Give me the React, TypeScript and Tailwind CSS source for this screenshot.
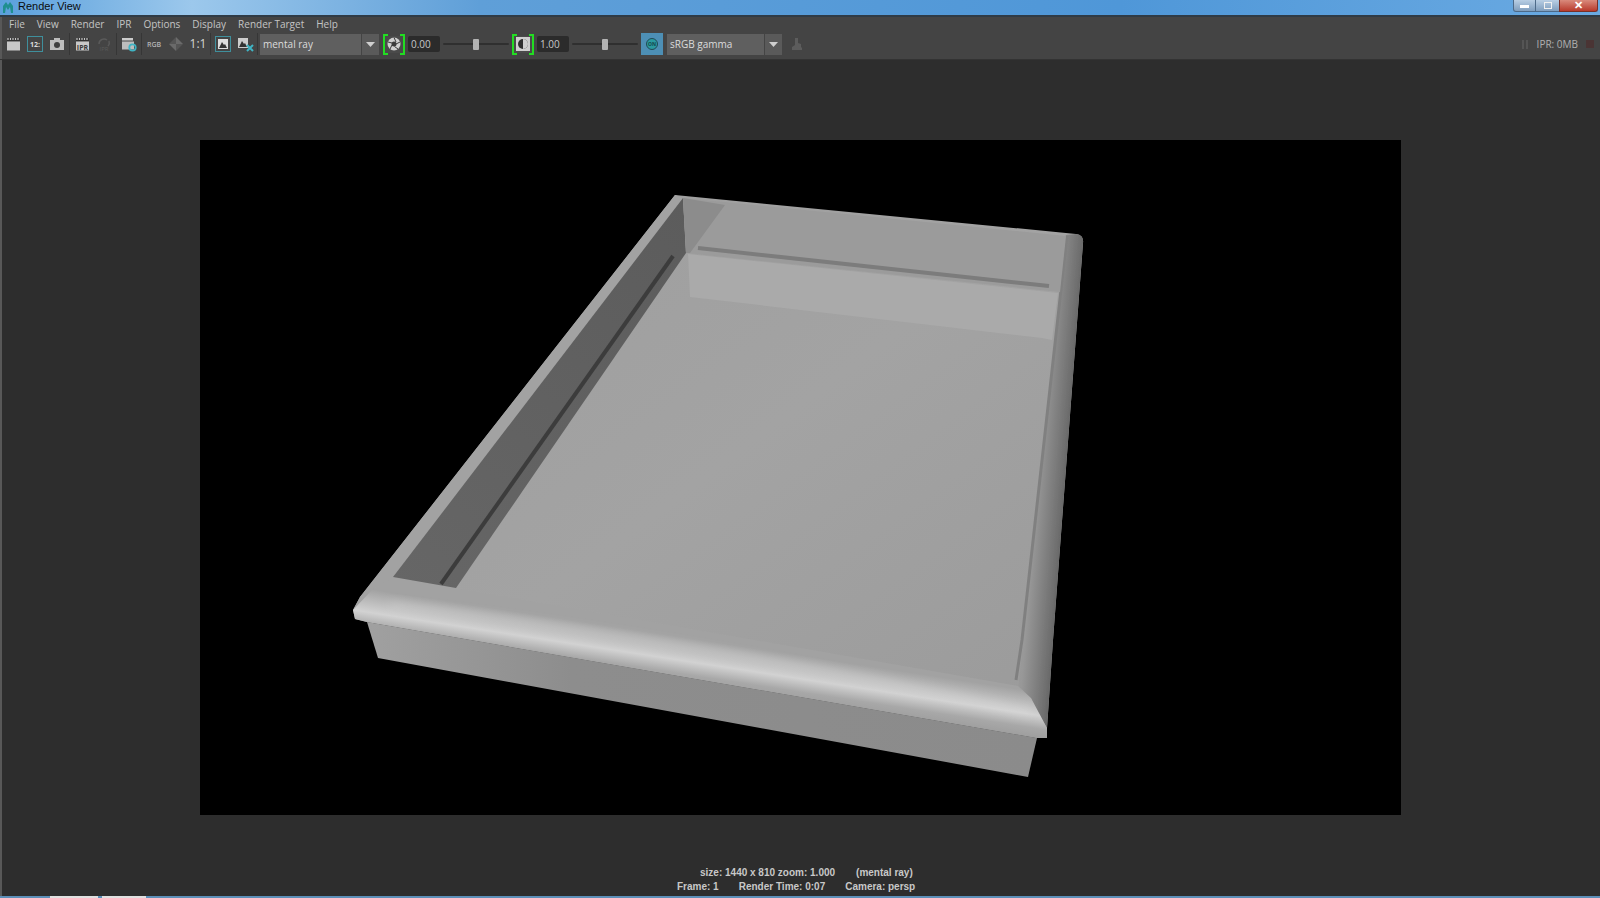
import React from "react";

const Sep = () => <div className="w-[1px] h-[22px] bg-[#363636] mx-[1px] shrink-0" />;

const Box = ({ children, active }: { children: React.ReactNode; active?: boolean }) => (
  <div className="w-[22px] h-[22px] flex items-center justify-center shrink-0">
    <div className={active ? "w-[16px] h-[16px] border border-[#3f8f9c] flex items-center justify-center" : "flex items-center justify-center"}>{children}</div>
  </div>
);

const Clapper = ({ tone = "#c8c8c8", children }: { tone?: string; children?: React.ReactNode }) => (
  <svg width="15" height="14" viewBox="0 0 15 14">
    <rect x="1" y="1" width="13" height="3" fill="#303030" />
    <path d="M2 1v2M4.5 1v2M7 1v2M9.5 1v2M12 1v2" stroke={tone} strokeWidth="1.2" />
    <rect x="1" y="4.5" width="13" height="9" fill={tone} />
    {children}
  </svg>
);

const Dropdown = ({ label, w }: { label: string; w: string }) => (
  <div className={`flex h-[21px] shrink-0 ${w}`}>
    <div className="flex-1 bg-[#5f5f5f] flex items-center pl-[3px] text-[10px] text-[#dcdcdc]">{label}</div>
    <div className="w-[17px] ml-[1px] bg-[#5a5a5a] flex items-center justify-center">
      <svg width="9" height="5" viewBox="0 0 9 5"><path d="M0 0h9L4.5 5z" fill="#cfcfcf" /></svg>
    </div>
  </div>
);

const Slider = () => (
  <div className="relative w-[66px] h-[21px] flex items-center shrink-0">
    <div className="w-full h-[2px] bg-[#2f2f2f] rounded" />
    <div className="absolute left-[30px] top-[5px] w-[6px] h-[11px] rounded-[1px] bg-[#b4b4b4]" />
  </div>
);

const Bracket = ({ children }: { children: React.ReactNode }) => (
  <div className="w-[22px] h-[21px] border-2 border-[#22dd22] bg-[#4a4a4a] relative flex items-center justify-center shrink-0">
    <div className="absolute left-[3px] right-[3px] top-[-2px] h-[2px] bg-[#444444]" />
    <div className="absolute left-[3px] right-[3px] bottom-[-2px] h-[2px] bg-[#444444]" />
    {children}
  </div>
);

const Field = ({ v }: { v: string }) => (
  <div className="w-[32px] h-[16px] ml-[3px] bg-[#2b2b2b] rounded-[2px] flex items-center pl-[3px] text-[10px] text-[#c8c8c8] shrink-0">{v}</div>
);

export default function App() {
  return (
    <div className="w-[1600px] h-[898px] overflow-hidden flex flex-col bg-[#2d2d2d] font-['Open_Sans',sans-serif]">
      {/* title bar */}
      <div className="h-[15px] shrink-0 flex bg-[linear-gradient(90deg,#5aa0dc,#9cc8ec_12%,#5f9fd8_30%,#4f97d8_70%,#6aaae2)]">
        <svg width="18" height="15" viewBox="0 0 18 15" className="shrink-0">
          <path d="M3 13V6l3-4 2 3 2-3 3 4v7h-2l-1-6-2 3-2-3-1 6z" fill="#1f8f8f" />
        </svg>
        <div className="text-[11px] leading-[13px] text-[#0c0c0c] font-['Liberation_Sans',sans-serif]">Render View</div>
        <div className="ml-auto mr-[2px] h-[12px] flex shrink-0">
          <div className="w-[23px] rounded-bl-[3px] border border-t-0 border-[#4d6a88] bg-[linear-gradient(#b9cfe4,#7f9dbd)] flex items-center justify-center">
            <div className="w-[9px] h-[3px] bg-white mt-[2px]" />
          </div>
          <div className="w-[23px] border-b border-[#4d6a88] bg-[linear-gradient(#b9cfe4,#7f9dbd)] flex items-center justify-center">
            <div className="w-[8px] h-[7px] border border-[#f0f0f0]" />
          </div>
          <div className="w-[39px] rounded-br-[3px] border border-t-0 border-[#7a3028] bg-[linear-gradient(#d98a7c,#b83a2c)] flex items-center justify-center text-white text-[11px] leading-none font-bold font-['Liberation_Sans',sans-serif]">✕</div>
        </div>
      </div>
      <div className="h-[2px] shrink-0 bg-[#2f3b46]" />
      {/* menu + toolbar */}
      <div className="h-[42px] shrink-0 bg-[#444444] border-l-2 border-[#585858] flex flex-col">
        <div className="h-[15px] flex items-center gap-[12px] pl-[7px] text-[10px] text-[#c4c4c4] shrink-0">
          {["File", "View", "Render", "IPR", "Options", "Display", "Render Target", "Help"].map((m) => (
            <span key={m}>{m}</span>
          ))}
        </div>
        <div className="flex items-center h-[24px]">
          <Box><Clapper /></Box>
          <Box active><span className="text-[7px] leading-none text-[#ddd] font-bold">12:</span></Box>
          <Box>
            <svg width="14" height="12" viewBox="0 0 14 12"><rect y="2" width="14" height="10" fill="#bcbcbc" /><rect x="4" y="0" width="6" height="3" fill="#bcbcbc" /><circle cx="7" cy="7" r="3" fill="#3e3e3e" /></svg>
          </Box>
          <Sep />
          <Box><Clapper><text x="7.5" y="12.5" fontSize="7" fontWeight="700" textAnchor="middle" fill="#3a3a3a">IPR</text></Clapper></Box>
          <Box>
            <svg width="16" height="16" viewBox="0 0 16 16" fill="none" stroke="#5a5a5a" strokeWidth="1.5"><path d="M3 8a5 5 0 0 1 8-4M13 5a5 5 0 0 1-1 5" /><text x="8" y="15" fontSize="6" fill="#5a5a5a" stroke="none" textAnchor="middle">IPR</text></svg>
          </Box>
          <Sep />
          <Box>
            <svg width="16" height="15" viewBox="0 0 16 15"><rect x="1" y="1" width="11" height="2.5" fill="#ccc" /><rect x="1" y="4.5" width="12" height="8" fill="#bdbdbd" /><circle cx="11.5" cy="10.5" r="3.2" fill="none" stroke="#3fb4c4" strokeWidth="1.8" /></svg>
          </Box>
          <Sep />
          <Box><span className="text-[7px] leading-none text-[#b4b4b4] font-semibold">RGB</span></Box>
          <Box>
            <svg width="14" height="14" viewBox="0 0 14 14"><path d="M7 0l7 7H7z" fill="#6a6a6a" /><path d="M0 7h7v7z" fill="#6a6a6a" /><path d="M7 0v7H0z" fill="#555" /><path d="M14 7H7v7z" fill="#555" /></svg>
          </Box>
          <Box><span className="text-[12px] leading-none text-[#d4d4d4]">1:1</span></Box>
          <Sep />
          <Box active>
            <svg width="10" height="10" viewBox="0 0 10 10"><rect width="10" height="10" fill="#ddd" /><path d="M1 9l3-6 2 3 1-1 2 4z" fill="#333" /></svg>
          </Box>
          <Box>
            <svg width="17" height="15" viewBox="0 0 17 15"><rect x="1" y="1" width="10" height="10" fill="#ccc" /><path d="M2 10l3-6 2 3 1-1 2 4z" fill="#333" /><path d="M10 8l6 6M16 8l-6 6" stroke="#3fb4c4" strokeWidth="2" /></svg>
          </Box>
          <Sep />
          <div className="w-[1px]" />
          <Dropdown label="mental ray" w="w-[119px]" />
          <div className="w-[4px]" />
          <Bracket>
            <svg width="14" height="14" viewBox="0 0 14 14"><circle cx="7" cy="7" r="6.5" fill="#cfcfcf" /><circle cx="7" cy="7" r="2.5" fill="#3a3a3a" /><path d="M7 .5L9 5M13 5L9 7M11 12L7.5 9.5M3 12l2-4M1 5l4 1" stroke="#3a3a3a" strokeWidth="1" /></svg>
          </Bracket>
          <Field v="0.00" />
          <div className="w-[3px]" />
          <Slider />
          <div className="w-[3px]" />
          <Bracket>
            <svg width="14" height="14" viewBox="0 0 14 14"><rect width="14" height="14" fill="#cfcfcf" /><circle cx="7" cy="7" r="5" fill="#2f2f2f" /><path d="M7 2a5 5 0 0 1 0 10z" fill="#cfcfcf" /></svg>
          </Bracket>
          <Field v="1.00" />
          <div className="w-[3px]" />
          <Slider />
          <div className="w-[3px]" />
          <div className="w-[22px] h-[22px] bg-[#4d8fb5] flex items-center justify-center shrink-0">
            <div className="w-[12px] h-[12px] rounded-full bg-[#2a9a9f] border border-[#214a55] text-[5px] leading-[10px] text-center text-[#15464c] font-bold">ON</div>
          </div>
          <div className="w-[4px]" />
          <Dropdown label="sRGB gamma" w="w-[115px]" />
          <div className="w-[4px]" />
          <Box>
            <svg width="14" height="14" viewBox="0 0 14 14"><path d="M5 1h3v5l3 1v3l1 1v2H2v-3l3-2z" fill="#5c5c5c" /></svg>
          </Box>
          <div className="ml-auto flex items-center shrink-0">
            <div className="w-[2px] h-[9px] bg-[#555]" />
            <div className="w-[2px] h-[9px] bg-[#555] ml-[2px]" />
            <span className="ml-[9px] text-[10px] text-[#b0b0b0]">IPR: 0MB</span>
            <div className="ml-[8px] mr-[6px] w-[8px] h-[8px] bg-[#4a3434]" />
          </div>
        </div>
      </div>
      <div className="h-[1px] shrink-0 bg-[#333333]" />
      {/* canvas */}
      <div className="flex-1 min-h-0 flex flex-col border-l-2 border-[#585858]">
        <div className="pl-[198px] pt-[80px] shrink-0">
          <svg width="1201" height="675" viewBox="200 140 1201 675" className="block bg-black">
            <defs>
              <linearGradient id="floor" x1="0" y1="0" x2="1" y2="1">
                <stop offset="0" stopColor="#9d9d9d" />
                <stop offset="0.5" stopColor="#a3a3a3" />
                <stop offset="1" stopColor="#9a9a9a" />
              </linearGradient>
              <linearGradient id="rimR" x1="1010" y1="450" x2="1075" y2="455" gradientUnits="userSpaceOnUse">
                <stop offset="0" stopColor="#a0a0a0" />
                <stop offset="0.45" stopColor="#989898" />
                <stop offset="1" stopColor="#5c5c5c" />
              </linearGradient>
              <linearGradient id="rimF" x1="700" y1="640" x2="690" y2="705" gradientUnits="userSpaceOnUse">
                <stop offset="0" stopColor="#a2a2a2" />
                <stop offset="0.35" stopColor="#d2d2d2" />
                <stop offset="0.55" stopColor="#a8a8a8" />
                <stop offset="1" stopColor="#8a8a8a" />
              </linearGradient>
              <linearGradient id="side" x1="700" y1="680" x2="695" y2="730" gradientUnits="userSpaceOnUse">
                <stop offset="0" stopColor="#8a8a8a" />
                <stop offset="1" stopColor="#7f7f7f" />
              </linearGradient>
              <linearGradient id="sideX" x1="370" y1="0" x2="1040" y2="0" gradientUnits="userSpaceOnUse">
                <stop offset="0" stopColor="#a0a0a0" />
                <stop offset="0.3" stopColor="#8d8d8d" />
                <stop offset="1" stopColor="#8b8b8b" />
              </linearGradient>
              <linearGradient id="wall" x1="680" y1="200" x2="400" y2="590" gradientUnits="userSpaceOnUse">
                <stop offset="0" stopColor="#5c5c5c" />
                <stop offset="1" stopColor="#666666" />
              </linearGradient>
              <filter id="b1"><feGaussianBlur stdDeviation="0.7" /></filter>
              <filter id="b4"><feGaussianBlur stdDeviation="4" /></filter>
            </defs>
            {/* front side */}
            <path d="M367 622L378 658L1028 777L1037 738Z" fill="url(#sideX)" filter="url(#b1)" />
            {/* whole top */}
            <path d="M675 195L1076 234Q1084 235 1083 243L1053 640L1047 728L1047 738L1037 738L367 622L355 619L353 610L360 597Z" fill="url(#floor)" filter="url(#b1)" />
            {/* right rim */}
            <path d="M1066 235L1076 234Q1084 235 1083 243L1053 640L1047 728L1030 700L1018 690Z" fill="url(#rimR)" filter="url(#b1)" />
            <path d="M1067 236L1022 640L1016 680" stroke="#808080" strokeWidth="3" fill="none" />
            {/* left rim */}
            <path d="M675 195L683 198L393 577L375 592L353 610L360 597Z" fill="#a2a2a2" />
            {/* front rim */}
            <path d="M393 577L456 588L1018 686L1031 698L1047 728L1047 738L1037 738L367 622L355 619L353 610L372 590Z" fill="url(#rimF)" filter="url(#b1)" />
            <path d="M390 604Q700 640 1030 712" stroke="#e6e6e6" strokeOpacity="0.45" strokeWidth="3" fill="none" filter="url(#b4)" />
            {/* left wall */}
            <path d="M683 198L393 577L456 588L686 253Z" fill="url(#wall)" />
            <path d="M441 584L673 256" stroke="#3c3c3c" strokeWidth="4" fill="none" />
            {/* back wall */}
            <path d="M683 198L1066 236L1060 292L686 253Z" fill="#9b9b9b" />
            <path d="M683 198L725 205L690 253L686 253Z" fill="#8c8c8c" />
            {/* lit reflection */}
            <path d="M688 254L1058 293L1052 340L1042 338L690 297Z" fill="#aaaaaa" />
            <path d="M698 248L1049 286" stroke="#7c7c7c" strokeWidth="4" fill="none" />
          </svg>
        </div>
        <div className="mt-auto mb-[2px] text-[10px] leading-[14px] text-[#c8c8c8] font-bold font-['Liberation_Sans',sans-serif] shrink-0">
          <div className="flex pl-[698px]">
            <span>size: 1440 x 810 zoom: 1.000</span>
            <span className="ml-[21px]">(mental ray)</span>
          </div>
          <div className="flex pl-[675px]">
            <span>Frame: 1</span>
            <span className="ml-[20px]">Render Time: 0:07</span>
            <span className="ml-[20px]">Camera: persp</span>
          </div>
        </div>
      </div>
      {/* bottom strip */}
      <div className="h-[2px] shrink-0 bg-[#5c8fb8] flex">
        <div className="ml-[50px] w-[48px] bg-[#e0e0e0]" />
        <div className="ml-[4px] w-[44px] bg-[#e0e0e0]" />
      </div>
    </div>
  );
}
